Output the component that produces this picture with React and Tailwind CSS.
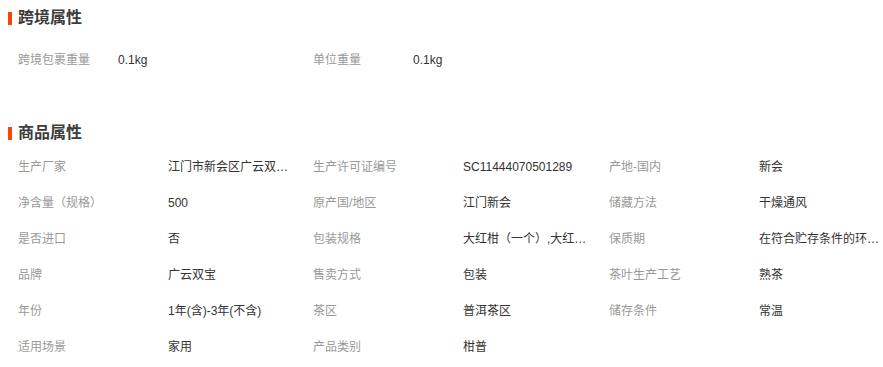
export default function App() {
  const font = { fontFamily: '"Liberation Sans", "Noto Sans CJK SC", sans-serif' };
  const cross = [
    ["跨境包裹重量", "0.1kg"],
    ["单位重量", "0.1kg"],
  ];
  const rows = [
    [["生产厂家", "江门市新会区广云双宝茶业有限公司"], ["生产许可证编号", "SC11444070501289"], ["产地-国内", "新会"]],
    [["净含量（规格）", "500"], ["原产国/地区", "江门新会"], ["储藏方法", "干燥通风"]],
    [["是否进口", "否"], ["包装规格", "大红柑（一个）,大红柑（两个）"], ["保质期", "在符合贮存条件的环境下可长期保存"]],
    [["品牌", "广云双宝"], ["售卖方式", "包装"], ["茶叶生产工艺", "熟茶"]],
    [["年份", "1年(含)-3年(不含)"], ["茶区", "普洱茶区"], ["储存条件", "常温"]],
    [["适用场景", "家用"], ["产品类别", "柑普"]],
  ];
  const Header = ({ title }) => (
    <div className="flex items-center h-[34px] pl-2 pt-[2px]">
      <div className="w-1 h-[13px] bg-[#ff4400] mr-[6px]" />
      <span className="text-[16px] font-bold text-[#3c3c3c] leading-none">{title}</span>
    </div>
  );
  return (
    <div className="w-[883px] h-[367px] bg-white overflow-hidden" style={font}>
      <Header title="跨境属性" />
      <div className="pt-[8px] pl-[18px]">
        <div className="flex h-9 items-center text-[12px]">
          {cross.map(([k, v]) => (
            <div key={k} className="flex w-[295px] shrink-0 items-center">
              <div className="w-[100px] shrink-0 text-[#999]">{k}</div>
              <div className="w-[120px] shrink-0 text-[#333] truncate">{v}</div>
            </div>
          ))}
        </div>
      </div>
      <div className="h-[37px]" />
      <Header title="商品属性" />
      <div className="pl-[18px]">
        {rows.map((r, i) => (
          <div key={i} className="flex h-9 items-center text-[12px]">
            {r.map(([k, v], j) => (
              <div key={k} className={`flex shrink-0 items-center ${j === 0 ? "w-[295px]" : "w-[296px]"}`}>
                <div className="w-[150px] shrink-0 text-[#999]">{k}</div>
                <div className="w-[124px] shrink-0 text-[#333] truncate">{v}</div>
              </div>
            ))}
          </div>
        ))}
      </div>
    </div>
  );
}
